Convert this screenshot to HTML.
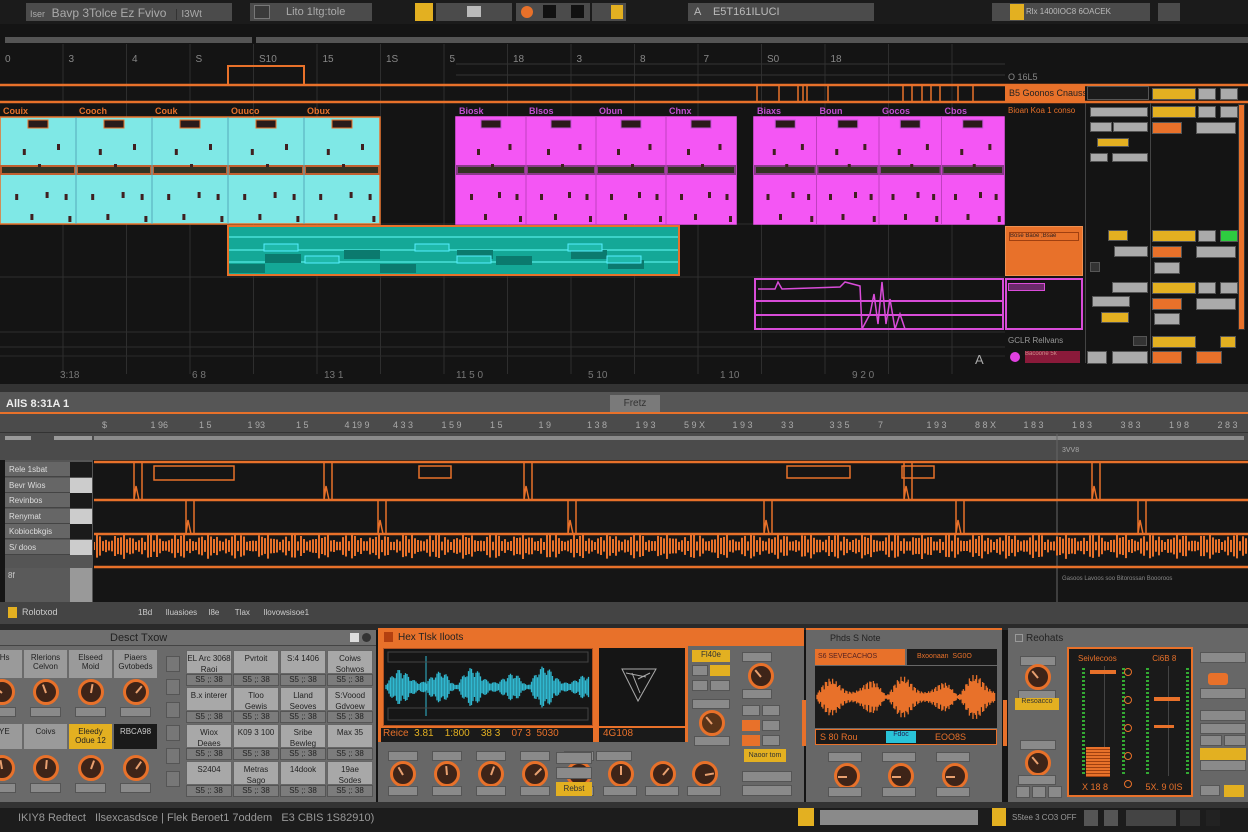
<!DOCTYPE html>
<html><head><meta charset="utf-8"><style>
*{box-sizing:border-box;margin:0;padding:0}
body{width:1248px;height:832px;overflow:hidden;background:#141414;font-family:"Liberation Sans",sans-serif;position:relative;color:#ccc}
.a{position:absolute}
.t{font-size:10px;white-space:nowrap}
.g{background:#4b4b4b}
.y{background:#e3b021}
.o{background:#e8712a}
.knob{position:absolute;width:26px;height:26px;border-radius:50%;border:3px solid #e8712a;background:#3e2418}
.knob:after{content:"";position:absolute;left:9px;top:2px;width:2px;height:9px;background:#e8a070;transform-origin:1px 9px;transform:rotate(var(--r,-40deg))}
.lbl{position:absolute;height:12px;background:#8a8a8a;border:1px solid #555;font-size:7px;color:#222;text-align:center;line-height:10px}
.cell{position:absolute;background:#a8a8a8;border:1px solid #666;color:#222;font-size:8px;text-align:center;line-height:11px;padding-top:2px}
</style></head><body>
<div class="a" style="left:0;top:0;width:1248px;height:24px;background:#1b1b1b"></div>
<div class="a g t" style="left:26px;top:3px;width:206px;height:18px;color:#aaa;padding:3px 4px;font-size:12px"><span style="font-size:9px">Iser</span>&nbsp; Bavp 3Tolce Ez Fvivo &nbsp;&nbsp;<span style="font-size:10px;border-left:1px solid #333;padding-left:4px">I3Wt</span></div>
<div class="a g t" style="left:250px;top:3px;width:122px;height:18px;color:#aaa;padding:3px 4px 0 36px;font-size:11px">Lito 1ltg:tole</div>
<div class="a" style="left:254px;top:5px;width:16px;height:14px;border:1px solid #777;background:#3a3a3a"></div>
<div class="a y" style="left:415px;top:3px;width:18px;height:18px"></div>
<div class="a g" style="left:436px;top:3px;width:76px;height:18px"></div>
<div class="a" style="left:467px;top:6px;width:14px;height:11px;background:#bbb"></div>
<div class="a g" style="left:516px;top:3px;width:74px;height:18px"></div>
<div class="a" style="left:521px;top:6px;width:12px;height:12px;border-radius:50%;background:#e8712a"></div>
<div class="a" style="left:543px;top:5px;width:13px;height:13px;background:#111"></div>
<div class="a" style="left:571px;top:5px;width:13px;height:13px;background:#111"></div>
<div class="a g" style="left:592px;top:3px;width:34px;height:18px"></div>
<div class="a y" style="left:611px;top:5px;width:12px;height:14px"></div>
<div class="a g t" style="left:688px;top:3px;width:186px;height:18px;color:#bbb;padding:3px 6px;font-size:11px">A &nbsp;&nbsp; E5T161ILUCI</div>
<div class="a g t" style="left:992px;top:3px;width:158px;height:18px;color:#bbb;padding:4px 0 0 34px;font-size:8px">Rlx 1400IOC8 6OACEK</div>
<div class="a y" style="left:1010px;top:4px;width:14px;height:16px"></div>
<div class="a g" style="left:1158px;top:3px;width:22px;height:18px"></div>
<div class="a" style="left:5px;top:37px;width:247px;height:6px;background:#555"></div>
<div class="a" style="left:256px;top:37px;width:992px;height:6px;background:#555"></div>
<svg class="a" style="left:0;top:44px" width="1248" height="390" id="arr"></svg>
<div class="a t" style="left:1005px;top:86px;width:80px;height:16px;background:#e8712a;color:#222;font-size:9px;padding:2px 4px;overflow:hidden">B5 Goonos Cnauss</div>
<div class="a t" style="left:1008px;top:106px;color:#e8712a;font-size:8px">Bioan Koa 1 conso</div>
<div class="a" style="left:1005px;top:226px;width:78px;height:50px;background:#e8712a;border:1px solid #f09050"></div>
<div class="a t" style="left:1009px;top:232px;width:70px;height:9px;border:1px solid #a04010;font-size:6px;color:#322;overflow:hidden">Bose Baoe ;Bsae</div>
<div class="a" style="left:1005px;top:278px;width:78px;height:52px;border:2px solid #d94cd9"></div>
<div class="a" style="left:1008px;top:283px;width:37px;height:8px;border:1px solid #d94cd9;background:#6a2a6a"></div>
<div class="a t" style="left:1008px;top:336px;color:#999;font-size:8px">GCLR Rellvans</div>
<div class="a" style="left:1010px;top:352px;width:10px;height:10px;border-radius:50%;background:#e040e0"></div>
<div class="a t" style="left:1025px;top:351px;width:55px;height:12px;background:#8a1a3a;font-size:6px;color:#c88;overflow:hidden">Bacoone 5k</div>
<div class="a" style="left:0;top:384px;width:1248px;height:8px;background:#333"></div>
<div class="a" style="left:0;top:392px;width:1248px;height:21px;background:#565656"></div>
<div class="a t" style="left:6px;top:398px;color:#eee;font-size:11px;font-weight:bold">AllS 8:31A 1</div>
<div class="a" style="left:610px;top:395px;width:50px;height:18px;background:#7a7a7a;color:#333;font-size:10px;text-align:center;line-height:18px">Fretz</div>
<div class="a" style="left:0;top:412px;width:1248px;height:2px;background:#e8712a"></div>
<div class="a" style="left:0;top:414px;width:1248px;height:46px;background:#4b4b4b"></div>
<div class="a" style="left:0;top:432px;width:1248px;height:1px;background:#333"></div>
<div class="a" style="left:94px;top:436px;width:1150px;height:4px;background:#8a8a8a"></div>
<div class="a" style="left:5px;top:436px;width:26px;height:4px;background:#9a9a9a"></div>
<div class="a" style="left:54px;top:436px;width:38px;height:4px;background:#9a9a9a"></div>
<div class="a" style="left:0;top:460px;width:1248px;height:142px;background:#151515"></div>
<div class="a" style="left:5px;top:460px;width:88px;height:142px;background:#555"></div>
<svg class="a" style="left:94px;top:414px" width="1154" height="188" id="ed"></svg>
<div class="a" style="left:0;top:602px;width:1248px;height:22px;background:#444"></div>
<div class="a t" style="left:8px;top:607px;color:#ccc;font-size:9px"><span style="display:inline-block;width:9px;height:11px;background:#e3b021;vertical-align:middle"></span> &nbsp;Rolotxod</div>
<div class="a t" style="left:138px;top:608px;color:#ccc;font-size:8px">1Bd &nbsp;&nbsp;&nbsp;&nbsp; Iluasioes &nbsp;&nbsp;&nbsp; I8e &nbsp;&nbsp;&nbsp;&nbsp;&nbsp; Tlax &nbsp;&nbsp;&nbsp;&nbsp; Ilovowsisoe1</div>
<div class="a" style="left:0;top:624px;width:1248px;height:6px;background:#2a2a2a"></div>
<div class="a" style="left:0;top:630px;width:376px;height:172px;background:#6a6a6a"></div>
<div class="a" style="left:0;top:630px;width:376px;height:16px;background:#6e6e6e;border-bottom:1px solid #444"></div>
<div class="a t" style="left:110px;top:632px;color:#222;font-size:11px">Desct Txow</div>
<div class="a" style="left:350px;top:633px;width:9px;height:9px;background:#ddd"></div>
<div class="a" style="left:362px;top:633px;width:9px;height:9px;border-radius:50%;background:#333"></div>
<div class="a" style="left:378px;top:628px;width:426px;height:174px;background:#676767"></div>
<div class="a o" style="left:378px;top:628px;width:426px;height:18px"></div>
<div class="a t" style="left:398px;top:632px;color:#222;font-size:10px">Hex Tlsk Iloots</div>
<div class="a" style="left:384px;top:632px;width:9px;height:10px;background:#b34010"></div>
<div class="a" style="left:378px;top:646px;width:218px;height:96px;background:#e8712a"></div>
<div class="a" style="left:383px;top:648px;width:210px;height:78px;background:#161616;border:1px solid #b05020"></div>
<svg class="a" style="left:384px;top:650px" width="208" height="74" id="wb"></svg>
<div class="a t" style="left:381px;top:728px;width:212px;height:14px;background:#1a1a1a;color:#e8712a;font-size:10px;padding-left:2px">Reice <span style="color:#e3b021">&nbsp;3.81 &nbsp;&nbsp; 1:800 &nbsp;&nbsp; 38 3</span> &nbsp;&nbsp; 07 3 &nbsp;5030</div>
<div class="a" style="left:596px;top:646px;width:92px;height:96px;background:#e8712a"></div>
<div class="a" style="left:599px;top:648px;width:86px;height:78px;background:#151515"></div>
<svg class="a" style="left:620px;top:665px" width="40" height="40"><path d="M2 4 L36 4 L18 36 Z M6 8 L26 12 M12 8 L20 28 M18 14 L30 8" stroke="#aaa" fill="none" stroke-width="1"/></svg>
<div class="a t" style="left:599px;top:728px;width:86px;height:14px;background:#1a1a1a;color:#e8712a;font-size:10px;padding-left:4px">4G108</div>
<div class="a" style="left:806px;top:628px;width:196px;height:174px;background:#676767;border-top:2px solid #e8712a"></div>
<div class="a t" style="left:830px;top:633px;color:#222;font-size:9px">Phds S Note</div>
<div class="a t" style="left:815px;top:649px;width:90px;height:16px;background:#e8712a;font-size:7px;color:#522;padding:4px 3px">S6 SEVECACHOS</div>
<div class="a t" style="left:907px;top:649px;width:90px;height:16px;background:#1a1a1a;font-size:7px;color:#e8712a;padding:4px 10px">Bxoonaan &nbsp;SG0O</div>
<div class="a" style="left:815px;top:666px;width:182px;height:62px;background:#1a1a1a"></div>
<svg class="a" style="left:815px;top:668px" width="182" height="58" id="wc"></svg>
<div class="a t" style="left:815px;top:729px;width:182px;height:16px;background:#1a1a1a;border:1px solid #e8712a;font-size:9px;color:#e8712a;padding:2px 4px">S 80 Rou</div>
<div class="a t" style="left:886px;top:731px;width:30px;height:12px;background:#29c3d8;font-size:7px;color:#225;text-align:center">Fdoc</div>
<div class="a t" style="left:935px;top:732px;font-size:9px;color:#e8712a">EOO8S</div>
<div class="a" style="left:1008px;top:628px;width:240px;height:174px;background:#676767"></div>
<div class="a t" style="left:1026px;top:633px;color:#222;font-size:10px">Reohats</div>
<div class="a" style="left:1015px;top:634px;width:8px;height:8px;border:1px solid #999"></div>
<div class="a" style="left:1067px;top:647px;width:126px;height:150px;background:#1a1a1a;border:2px solid #e8712a"></div>
<div class="a t" style="left:1078px;top:654px;color:#e8712a;font-size:8px">Seivlecoos &nbsp;&nbsp;&nbsp;&nbsp;&nbsp;&nbsp;&nbsp;&nbsp;&nbsp;&nbsp;&nbsp;&nbsp;&nbsp;&nbsp; Ci6B 8</div>
<div class="a t" style="left:1082px;top:782px;color:#e8712a;font-size:9px">X 18 8 &nbsp;&nbsp;&nbsp;&nbsp;&nbsp;&nbsp;&nbsp;&nbsp;&nbsp;&nbsp;&nbsp;&nbsp;&nbsp; 5X. 9 0IS</div>
<div class="a" style="left:0;top:802px;width:1248px;height:6px;background:#333"></div>
<div class="a" style="left:0;top:808px;width:1248px;height:24px;background:#1c1c1c"></div>
<div class="a t" style="left:18px;top:812px;color:#999;font-size:11px">IKIY8 Redtect &nbsp; Ilsexcasdsce | Flek Beroet1 7oddem &nbsp; E3 CBIS 1S82910)</div>
<div class="a y" style="left:798px;top:808px;width:16px;height:18px"></div>
<div class="a" style="left:820px;top:810px;width:158px;height:15px;background:#8a8a8a"></div>
<div class="a y" style="left:992px;top:808px;width:14px;height:18px"></div>
<div class="a t" style="left:1012px;top:813px;color:#999;font-size:8px">S5tee 3 CO3 OFF</div>
<div class="a" style="left:1084px;top:810px;width:14px;height:16px;background:#555"></div>
<div class="a" style="left:1104px;top:810px;width:14px;height:16px;background:#555"></div>
<div class="a" style="left:1126px;top:810px;width:50px;height:16px;background:#444"></div>
<div class="a" style="left:1180px;top:810px;width:20px;height:16px;background:#333"></div>
<div class="a" style="left:1206px;top:810px;width:14px;height:16px;background:#222"></div>
<script>
var NS='http://www.w3.org/2000/svg';
function el(p,t,a,txt){var e=document.createElementNS(NS,t);for(var k in a)e.setAttribute(k,a[k]);if(txt)e.textContent=txt;p.appendChild(e);return e}
function div(css,txt,cls){var d=document.createElement('div');d.className='a '+(cls||'');d.style.cssText=css;if(txt)d.innerHTML=txt;document.body.appendChild(d);return d}
var s=document.getElementById('arr');var O='#e8712a';
for(var x=63;x<1005;x+=63.5){el(s,'line',{x1:x,y1:0,x2:x,y2:330,stroke:'#2e2e2e'})}
[180,233,288,303].forEach(function(y){el(s,'line',{x1:0,y1:y,x2:1005,y2:y,stroke:'#2e2e2e'})});
el(s,'line',{x1:456,y1:20,x2:1005,y2:20,stroke:'#333'});el(s,'line',{x1:456,y1:31,x2:1005,y2:31,stroke:'#333'});
var rl=['0','3','4','S','S10','15','1S','5','18','3','8','7','S0','18'];
rl.forEach(function(t,i){el(s,'text',{x:5+i*63.5,y:18,fill:'#888','font-size':10,'font-family':'Liberation Sans'},t)});
el(s,'text',{x:1008,y:36,fill:'#888','font-size':9},'O 16L5');
el(s,'rect',{x:228,y:22,width:76,height:19,fill:'none',stroke:O,'stroke-width':2});
el(s,'line',{x1:0,y1:41,x2:1248,y2:41,stroke:O,'stroke-width':2.5});
el(s,'line',{x1:0,y1:58,x2:1248,y2:58,stroke:O,'stroke-width':2.5});
[757,779,798,803,807,828,903,912,922,931,940,958,973].forEach(function(x){el(s,'line',{x1:x,y1:41,x2:x,y2:58,stroke:O,'stroke-width':1.5})});
function clips(x0,x1,fill,lab,lc){var w=(x1-x0)/ (lab.length);
 el(s,'rect',{x:x0,y:73,width:x1-x0,height:107,fill:fill,stroke:lc==O?O:fill,'stroke-width':1.5});
 el(s,'rect',{x:x0,y:121,width:x1-x0,height:10,fill:fill=='#7fe8e6'?'#c06030':'#8a3a8a'});
 for(var i=0;i<lab.length;i++){var cx=x0+i*w;
  el(s,'text',{x:cx+3,y:70,fill:lc,'font-size':9,'font-weight':'bold'},lab[i]);
  if(i)el(s,'line',{x1:cx,y1:73,x2:cx,y2:180,stroke:fill=='#7fe8e6'?'#5ab':'#c040c0'});
  el(s,'rect',{x:cx+w/2-10,y:76,width:20,height:8,fill:'#2a1a1a',stroke:lc});
  [[.3,105],[.75,100],[.5,120],[.2,150],[.6,148],[.85,150],[.4,170],[.9,172]].forEach(function(p){el(s,'rect',{x:cx+w*p[0],y:p[1],width:3,height:6,fill:'#402020'})});
  el(s,'rect',{x:cx+2,y:123,width:w-4,height:6,fill:'#332'});}
}
clips(0,380,'#7fe8e6',['Couix','Cooch','Couk','Ouuco','Obux'],O);
clips(456,736,'#f456f4',['Biosk','Blsos','Obun','Chnx'],'#c050d0');
clips(754,1004,'#f456f4',['Biaxs','Boun','Gocos','Cbos'],'#c050d0');
el(s,'rect',{x:228,y:182,width:451,height:49,fill:'#14a897',stroke:O,'stroke-width':2});
[193,206,218].forEach(function(y){el(s,'line',{x1:229,y1:y,x2:678,y2:y,stroke:'#4ae0d8','stroke-width':1.5})});
[[229,220],[265,210],[344,206],[380,220],[457,206],[496,212],[571,206],[608,216]].forEach(function(p){el(s,'rect',{x:p[0],y:p[1],width:36,height:9,fill:'#0b7a6e'})});
[[264,200],[415,200],[568,200],[305,212],[457,212],[607,212]].forEach(function(p){el(s,'rect',{x:p[0],y:p[1],width:34,height:7,fill:'#1fb8a8',stroke:'#5ef'})});
el(s,'rect',{x:755,y:235,width:248,height:50,fill:'none',stroke:'#d94cd9','stroke-width':2});
el(s,'line',{x1:755,y1:257,x2:1003,y2:257,stroke:'#d94cd9','stroke-width':2});el(s,'line',{x1:755,y1:271,x2:1003,y2:271,stroke:'#d94cd9','stroke-width':2});
el(s,'path',{d:'M758 245 L775 245 L778 238 L782 245 L840 243 L845 238 L860 242 L862 285 M862 285 L870 270 L874 250 L878 280 L882 238 L886 280 L890 255 L895 285 L900 270 L905 285',stroke:'#d94cd9',fill:'none','stroke-width':1.5});
el(s,'line',{x1:0,y1:312,x2:1005,y2:312,stroke:'#2a2a2a'});
['3:18','6 8','13 1','11 5 0','5 10','1 10','9 2 0'].forEach(function(t,i){el(s,'text',{x:60+i*132,y:334,fill:'#777','font-size':10},t)});
el(s,'text',{x:975,y:320,fill:'#aaa','font-size':13},'A');
var rp=[[1087,86,62,14,'#1a1a1a'],[1152,88,44,12,'#e3b021'],[1198,88,18,12,'#aaa'],[1220,88,18,12,'#aaa'],
[1090,107,58,10,'#aaa'],[1152,106,44,12,'#e3b021'],[1198,106,18,12,'#aaa'],[1220,106,18,12,'#aaa'],
[1090,122,22,10,'#aaa'],[1113,122,35,10,'#aaa'],[1152,122,30,12,'#e8712a'],[1196,122,40,12,'#aaa'],
[1097,138,32,9,'#e3b021'],[1090,153,18,9,'#aaa'],[1112,153,36,9,'#aaa'],
[1108,230,20,11,'#e3b021'],[1152,230,44,12,'#e3b021'],[1198,230,18,12,'#aaa'],[1220,230,18,12,'#2ecc40'],
[1114,246,34,11,'#aaa'],[1152,246,30,12,'#e8712a'],[1196,246,40,12,'#aaa'],[1090,262,10,10,'#333'],[1154,262,26,12,'#aaa'],
[1112,282,36,11,'#aaa'],[1152,282,44,12,'#e3b021'],[1198,282,18,12,'#aaa'],[1220,282,18,12,'#aaa'],
[1092,296,38,11,'#aaa'],[1152,298,30,12,'#e8712a'],[1196,298,40,12,'#aaa'],[1101,312,28,11,'#e3b021'],[1154,313,26,12,'#aaa'],
[1133,336,14,10,'#333'],[1152,336,44,12,'#e3b021'],[1220,336,16,12,'#e3b021'],
[1087,351,20,13,'#aaa'],[1112,351,36,13,'#aaa'],[1152,351,30,13,'#e8712a'],[1196,351,26,13,'#e8712a']];
rp.forEach(function(r){div('left:'+r[0]+'px;top:'+r[1]+'px;width:'+r[2]+'px;height:'+r[3]+'px;background:'+r[4]+';border:1px solid #555')});
div('left:1085px;top:103px;width:1px;height:260px;background:#444');div('left:1150px;top:103px;width:1px;height:260px;background:#444');
div('left:1238px;top:104px;width:7px;height:226px;background:#e8712a;border:1px solid #333');
var ed=document.getElementById('ed');
['$','1 96','1 5','1 93','1 5','4 19 9','4 3 3','1 5 9','1 5','1 9','1 3 8','1 9 3','5 9 X','1 9 3','3 3','3 3 5','7','1 9 3','8 8 X','1 8 3','1 8 3','3 8 3','1 9 8','2 8 3'].forEach(function(t,i){el(ed,'text',{x:8+i*48.5,y:14,fill:'#aaa','font-size':9},t)});
el(ed,'line',{x1:963,y1:20,x2:963,y2:188,stroke:'#666'});
el(ed,'text',{x:968,y:38,fill:'#aaa','font-size':7},'3VV8');
[48,86,120,153].forEach(function(y){el(ed,'line',{x1:0,y1:y,x2:1154,y2:y,stroke:O,'stroke-width':2.5})});
function pulse(x,y,h){return 'M'+x+' '+(y+h)+' L'+(x+2)+' '+(y+h-14)+' L'+(x+5)+' '+(y+h)+' M'+x+' '+y+' L'+x+' '+(y+h)+' M'+(x+8)+' '+y+' L'+(x+8)+' '+(y+h)}
var d='';[[40,48],[230,48],[430,48],[810,48],[998,48],[92,86],[284,86],[474,86],[670,86],[862,86],[1044,86]].forEach(function(p,i){
 var y=p[1],h=i<5?38:34;d+=pulse(p[0],y,h)});
el(ed,'path',{d:d,stroke:O,fill:'none','stroke-width':1.5});
[[60,52,80,14],[325,52,32,12],[693,52,63,12],[808,52,32,12]].forEach(function(r){el(ed,'rect',{x:r[0],y:r[1],width:r[2],height:r[3],fill:'none',stroke:O,'stroke-width':1.5})});
var w='';for(var x=0;x<1154;x+=3){var h=4+Math.abs(Math.sin(x*0.37)*Math.cos(x*0.11))*9;w+='M'+x+' '+(132-h)+' L'+x+' '+(132+h)}
el(ed,'path',{d:w,stroke:O,'stroke-width':2});
el(ed,'text',{x:968,y:166,fill:'#888','font-size':6},'Gasoos  Lavoos  soo  Bitorossan  Boooroos');
var tl=[['Rele 1sbat','#1a1a1a'],['Bevr Wios','#ccc'],['Revinbos','#1a1a1a'],['Renymat','#ccc'],['Kobiocbkgis','#1a1a1a'],['S/ doos','#ccc']];
tl.forEach(function(t,i){div('left:5px;top:'+(462+i*15.5)+'px;width:65px;height:15px;background:#666;border-bottom:1px solid #444;color:#ddd;font-size:8px;padding:3px 4px;white-space:nowrap',t[0]);div('left:70px;top:'+(462+i*15.5)+'px;width:22px;height:15px;background:'+t[1])});
div('left:5px;top:568px;width:65px;height:34px;background:#5a5a5a;color:#ccc;font-size:8px;padding:3px',' 8f');
div('left:70px;top:568px;width:22px;height:34px;background:#999');
function wave(id,W,H,col,amp,dense){var sv=document.getElementById(id);var p='';for(var x=2;x<W-2;x+=dense){var e=Math.pow(Math.abs(Math.sin(x*0.045)+0.6*Math.sin(x*0.13)),1.5)*amp+2;var h=e*(0.5+0.5*Math.abs(Math.sin(x*1.7)));p+='M'+x+' '+(H/2-h)+' L'+x+' '+(H/2+h)}el(sv,'path',{d:p,stroke:col,'stroke-width':1.3})}
wave('wb',208,74,'#30b8d0',12,1.5);
var wb=document.getElementById('wb');el(wb,'line',{x1:42,y1:6,x2:42,y2:66,stroke:'#30b8d0'});el(wb,'rect',{x:4,y:2,width:200,height:10,fill:'none',stroke:'#444'});el(wb,'rect',{x:4,y:58,width:200,height:12,fill:'none',stroke:'#444'});
wave('wc',182,58,'#e8712a',13,1.2);
var lab=['AHs','Rlerions<br>Celvon','Elseed<br>Moid','Piaers<br>Gvtobeds'];
for(var c=0;c<4;c++){var x=c==0?-18:24+(c-1)*45;var ww=c==0?40:43;
 div('left:'+x+'px;top:650px;width:'+ww+'px;height:28px;background:#9a9a9a;color:#222;font-size:8px;text-align:center;padding-top:3px',lab[c]);
 var k=div('left:'+(x+ww/2-13)+'px;top:679px;','','knob');k.style.setProperty('--r',(c*30-50)+'deg');
 div('left:'+(x+6)+'px;top:707px;width:'+(ww-12)+'px;height:10px;','','lbl');
 var l2=['AYE','Coivs','Eleedy<br>Odue 12','RBCA98'][c];
 div('left:'+x+'px;top:724px;width:'+ww+'px;height:25px;background:'+(c==2?'#e3b021':c==3?'#1a1a1a':'#9a9a9a')+';color:'+(c==3?'#ccc':'#222')+';font-size:8px;text-align:center;padding-top:3px',l2);
 var k2=div('left:'+(x+ww/2-13)+'px;top:755px;','','knob');k2.style.setProperty('--r',(c*15-10)+'deg');
 div('left:'+(x+6)+'px;top:783px;width:'+(ww-12)+'px;height:10px;','','lbl');}
for(var i=0;i<6;i++)div('left:166px;top:'+(656+i*23)+'px;width:14px;height:16px;background:#777;border:1px solid #555');
var ct=['EL Arc 3068<br>Raoi','Pvrtoit','S:4 1406','Coiws<br>Sohwos','B.x interer','Tloo<br>Gewis','Lland<br>Seoves','S:Voood<br>Gdvoew','Wiox<br>Deaes','K09 3 100','Sribe<br>Bewleg','Max 35','S2404','Metras<br>Sago','14dook','19ae<br>Sodes'];
for(var r=0;r<4;r++){for(var c=0;c<4;c++){var x=186+c*47;var y=650+r*37;div('left:'+x+'px;top:'+y+'px;width:46px;height:24px;',ct[r*4+c],'cell');
 div('left:'+x+'px;top:'+(y+24)+'px;width:46px;height:12px;background:#7c7c7c;border:1px solid #555;color:#222;font-size:8px;text-align:center','S5 ;: 38')}}
for(var c=0;c<5;c++){var x=388+c*44;div('left:'+x+'px;top:751px;width:30px;height:10px','','lbl');var k=div('left:'+(x+2)+'px;top:761px','','knob');k.style.setProperty('--r',(c*25-30)+'deg');div('left:'+x+'px;top:786px;width:30px;height:10px','','lbl')}
div('left:596px;top:751px;width:36px;height:10px','','lbl');div('left:556px;top:752px;width:36px;height:12px','','lbl');div('left:556px;top:767px;width:36px;height:12px','','lbl');
div('left:556px;top:782px;width:36px;height:14px;background:#e3b021;font-size:8px;color:#333;text-align:center;line-height:14px','Rebst');
for(var c=0;c<3;c++){var x=608+c*42;var k=div('left:'+(x)+'px;top:761px','','knob');k.style.setProperty('--r',(c*40)+'deg');div('left:'+(x-5)+'px;top:786px;width:34px;height:10px','','lbl')}
div('left:692px;top:650px;width:38px;height:12px;background:#e3b021;font-size:8px;color:#333;text-align:center','Fl40e');
div('left:692px;top:665px;width:16px;height:11px','','lbl');div('left:710px;top:665px;width:20px;height:11px;background:#e3b021');
div('left:692px;top:680px;width:16px;height:11px','','lbl');div('left:710px;top:680px;width:20px;height:11px','','lbl');
div('left:692px;top:699px;width:38px;height:10px','','lbl');div('left:699px;top:710px;background:#5a3418','','knob');
div('left:694px;top:736px;width:36px;height:10px','','lbl');
div('left:742px;top:652px;width:30px;height:10px','','lbl');div('left:748px;top:663px','','knob');div('left:742px;top:689px;width:30px;height:10px','','lbl');
div('left:742px;top:705px;width:18px;height:11px','','lbl');div('left:762px;top:705px;width:18px;height:11px','','lbl');
div('left:742px;top:720px;width:18px;height:11px;background:#e8712a');div('left:762px;top:720px;width:18px;height:11px','','lbl');
div('left:742px;top:735px;width:18px;height:11px;background:#e8712a');div('left:762px;top:735px;width:18px;height:11px','','lbl');
div('left:744px;top:749px;width:42px;height:13px;background:#e3b021;font-size:7px;color:#333;text-align:center;line-height:13px','Naoor tom');
div('left:742px;top:771px;width:50px;height:11px','','lbl');div('left:742px;top:785px;width:50px;height:11px','','lbl');
div('left:802px;top:700px;width:4px;height:46px;background:#e8712a');div('left:1003px;top:700px;width:4px;height:46px;background:#e8712a');
for(var c=0;c<3;c++){var x=836+c*54;div('left:'+(x-8)+'px;top:752px;width:34px;height:10px','','lbl');var k=div('left:'+(x-2)+'px;top:763px','','knob');k.style.setProperty('--r','-90deg');div('left:'+(x-8)+'px;top:787px;width:34px;height:10px','','lbl')}
div('left:1020px;top:656px;width:36px;height:10px','','lbl');div('left:1025px;top:664px','','knob');div('left:1018px;top:690px;width:38px;height:10px','','lbl');
div('left:1015px;top:698px;width:44px;height:12px;background:#e3b021;font-size:7px;color:#333;text-align:center','Resoacco');
div('left:1020px;top:740px;width:36px;height:10px','','lbl');div('left:1025px;top:750px','','knob');div('left:1018px;top:775px;width:38px;height:10px','','lbl');
div('left:1016px;top:786px;width:14px;height:12px','','lbl');div('left:1032px;top:786px;width:14px;height:12px','','lbl');div('left:1048px;top:786px;width:14px;height:12px','','lbl');
[[1200,652,46],[1200,688,46],[1200,710,46],[1200,723,46],[1200,735,22],[1224,735,22],[1200,760,46],[1200,785,20]].forEach(function(r){div('left:'+r[0]+'px;top:'+r[1]+'px;width:'+r[2]+'px;height:11px','','lbl')});
div('left:1208px;top:673px;width:20px;height:12px;background:#e8712a;border-radius:3px');
div('left:1200px;top:748px;width:46px;height:12px;background:#e3b021');div('left:1224px;top:785px;width:20px;height:12px;background:#e3b021');
for(var f=0;f<2;f++){var x=1086+f*64;
 div('left:'+(x+18)+'px;top:666px;width:1px;height:110px;background:#444');
 for(var y=668;y<776;y+=4){div('left:'+(x+36)+'px;top:'+y+'px;width:3px;height:2px;background:#3a3');div('left:'+(x-4)+'px;top:'+y+'px;width:3px;height:2px;background:#3a3')}
 div('left:'+(x+4)+'px;top:'+(f?697:670)+'px;width:26px;height:4px;background:#e8712a');
 if(f)div('left:'+(x+4)+'px;top:725px;width:20px;height:3px;background:#e8712a');
}
div('left:1086px;top:747px;width:24px;height:30px;background:repeating-linear-gradient(#e8712a 0 2px,#a04010 2px 3px)');
for(var i=0;i<5;i++)div('left:1124px;top:'+(668+i*28)+'px;width:8px;height:8px;border-radius:50%;border:1px solid #e8712a');
</script>
</body></html>
